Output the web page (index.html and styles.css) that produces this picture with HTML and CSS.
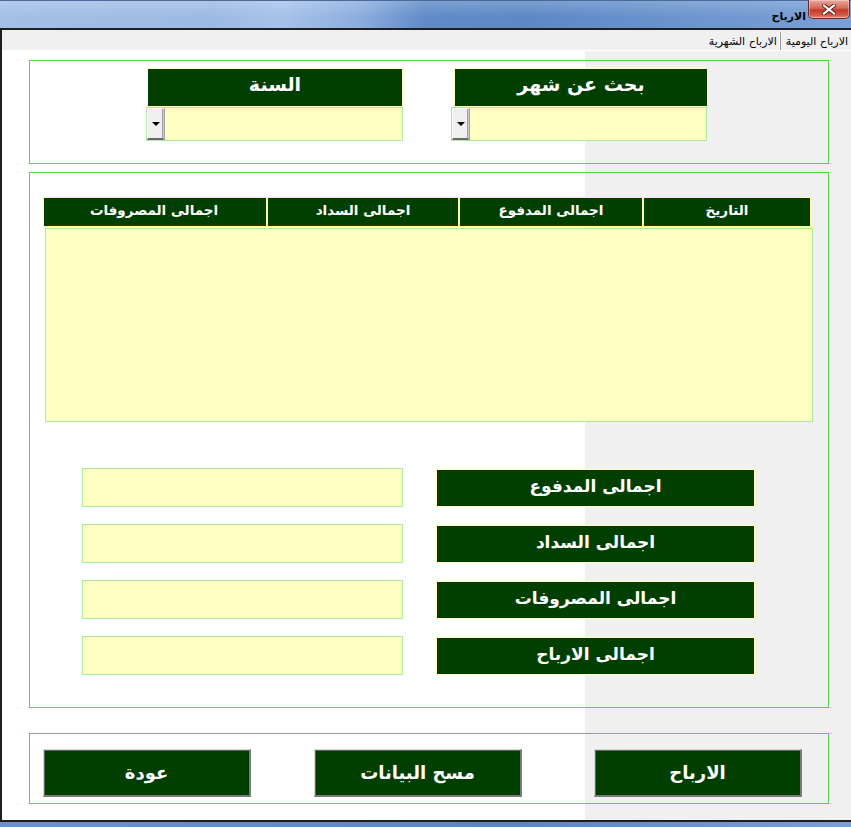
FILE: index.html
```html
<!DOCTYPE html>
<html lang="ar" dir="rtl">
<head>
<meta charset="utf-8">
<title>الارباح</title>
<link rel="stylesheet" href="styles.css">
</head>
<body>
<div class="window">
  <header class="titlebar">
    <button class="close" aria-label="إغلاق">
      <svg width="14" height="11" viewBox="0 0 14 11" aria-hidden="true">
        <path d="M2 1.5 L12 9.5 M12 1.5 L2 9.5" stroke="#5a1a1a" stroke-width="4" stroke-linecap="square"/>
        <path d="M2 1.5 L12 9.5 M12 1.5 L2 9.5" stroke="#ffffff" stroke-width="2.2" stroke-linecap="square"/>
      </svg>
    </button>
    <span class="title">الارباح</span>
  </header>
  <div class="client">
    <nav class="tabs">
      <span class="tab first">الارباح اليومية</span>
      <span class="tab">الارباح الشهرية</span>
    </nav>
    <main class="content">
      <section class="frame filters">
        <div class="group month">
          <div class="label">بحث عن شهر</div>
          <div class="combo"><span class="field"></span><span class="drop"><span class="arrow"></span></span></div>
        </div>
        <div class="group year">
          <div class="label">السنة</div>
          <div class="combo"><span class="field"></span><span class="drop"><span class="arrow"></span></span></div>
        </div>
      </section>

      <section class="frame data">
        <div class="grid-head">
          <div class="col">التاريخ</div>
          <div class="col">اجمالى المدفوع</div>
          <div class="col">اجمالى السداد</div>
          <div class="col last">اجمالى المصروفات</div>
        </div>
        <div class="grid-body"></div>
        <div class="totals">
          <div class="row"><div class="tlabel">اجمالى المدفوع</div><div class="tbox"></div></div>
          <div class="row"><div class="tlabel">اجمالى السداد</div><div class="tbox"></div></div>
          <div class="row"><div class="tlabel">اجمالى المصروفات</div><div class="tbox"></div></div>
          <div class="row"><div class="tlabel">اجمالى الارباح</div><div class="tbox"></div></div>
        </div>
      </section>

      <section class="frame actions">
        <button class="btn b1">الارباح</button>
        <button class="btn b2">مسح البيانات</button>
        <button class="btn b3">عودة</button>
      </section>
    </main>
  </div>
  <div class="bottombar"></div>
</div>
</body>
</html>
```

FILE: styles.css
```css
* { box-sizing: border-box; }
html, body { margin: 0; padding: 0; }
body {
  font-family: "DejaVu Sans", "Liberation Sans", sans-serif;
  background: #ffffff;
}

.window {
  width: 851px;
  height: 827px;
  display: flex;
  flex-direction: column;
  overflow: hidden;
  background: #5a86c3;
}

/* title bar */
.titlebar {
  height: 28px;
  flex: none;
  display: flex;
  align-items: flex-start;
  padding-right: 1px;
  background:
    linear-gradient(to bottom, rgba(255,255,255,0.18), rgba(255,255,255,0) 60%),
    linear-gradient(to right, #a3bfe6 0%, #9dbae4 25%, #a6c2ea 33%, #8eaedf 42%, #5f8bc8 50%, #5c88c6 62%, #6a93cd 78%, #7aa0d5 100%);
  border-top: 1px solid #4a6a9a;
}
.close {
  width: 42px;
  height: 19px;
  margin: -1px 0 0 0;
  padding: 0;
  border: 1px solid #6b2a2a;
  border-top: none;
  border-radius: 0 0 5px 5px;
  background: linear-gradient(to bottom, #e8a89c 0%, #d46a5a 45%, #c23a28 55%, #d45a48 85%, #e89080 100%);
  display: flex;
  align-items: center;
  justify-content: center;
  box-shadow: inset 0 0 0 1px rgba(255,255,255,0.35);
}
.close svg { display: block; }
.title {
  margin-right: 2px;
  margin-top: 9px;
  font-size: 11px;
  font-weight: bold;
  color: #000;
  line-height: 13px;
}

/* client area */
.client {
  height: 794px;
  flex: none;
  display: flex;
  flex-direction: column;
  border-top: 2px solid #1e1e1e;
  border-bottom: 2px solid #1e1e1e;
  border-left: 2px solid #1e1e1e;
}
.tabs {
  height: 21px;
  flex: none;
  display: flex;
  align-items: flex-end;
  background: #f0f0f0;
  border-bottom: 1px solid #ffffff;
}
.tab {
  height: 18px;
  font-size: 11px;
  line-height: 20px;
  padding: 0 3px 0 5px;
  color: #000;
  white-space: nowrap;
}
.tab.first {
  border-left: 1px solid #9a9a9a;
  box-shadow: -1px 0 0 #ffffff;
}

.content {
  flex: 1;
  padding: 9px 22px 0 27px;
  background: linear-gradient(to right, #ffffff 583px, #f0f0f0 583px);
}

.frame {
  width: 800px;
  border: 1px solid #4fd64f;
}

/* filters */
.filters {
  height: 104px;
  display: flex;
  align-items: flex-start;
  padding: 7px 120px 0 0;
  gap: 48px;
}
.group { width: 257px; }
.label {
  height: 39px;
  background: #003f00;
  border: 1px solid #ffffb8;
  color: #ffffff;
  font-weight: bold;
  font-size: 19px;
  line-height: 30px;
  text-align: center;
}
.month .label { margin-left: 3px; }
.year .label { margin-left: 1px; }
.combo {
  height: 34px;
  display: flex;
  background: #ffffc4;
  border: 1px solid #a8eaa0;
}
.month .combo { margin-right: 1px; }
.field { flex: 1; }
.drop {
  width: 17px;
  height: 32px;
  background: #efefef;
  border-top: 1px solid #ffffff;
  border-right: 1px solid #cfcfcf;
  border-left: 1px solid #ffffff;
  border-bottom: 2px solid #6a6a6a;
  box-shadow: 1px 0 0 #a0a0a0, inset -1px 0 0 #a0a0a0;
  display: flex;
  align-items: center;
  justify-content: center;
}
.arrow {
  width: 0;
  height: 0;
  border-left: 4px solid transparent;
  border-right: 4px solid transparent;
  border-top: 4px solid #000;
  margin-top: 1px;
}

/* data */
.data {
  height: 536px;
  margin-top: 8px;
  padding-top: 24px;
}
.grid-head {
  width: 768px;
  height: 30px;
  margin: 0 17px 0 0;
  display: grid;
  grid-template-columns: 168px 184px 192px 224px;
  background: #003f00;
  border: 1px solid #ffff9c;
}
.col {
  color: #ffffff;
  font-weight: bold;
  font-size: 13.5px;
  line-height: 24px;
  text-align: center;
  border-left: 2px solid #ffff9c;
  white-space: nowrap;
}
.col.last { border-left: none; }
.grid-body {
  width: 768px;
  height: 194px;
  margin: 1px 15px 0 0;
  background: #ffffc4;
  border: 1px solid #a8eaa0;
}
.totals {
  margin-top: 46px;
  display: flex;
  flex-direction: column;
  gap: 17px;
}
.row {
  display: flex;
  align-items: flex-start;
  padding-right: 73px;
  gap: 33px;
}
.tlabel {
  width: 319px;
  height: 38px;
  margin-top: 1px;
  background: #003f00;
  border: 1px solid #ffffb8;
  color: #ffffff;
  font-weight: bold;
  font-size: 17px;
  line-height: 32px;
  text-align: center;
  white-space: nowrap;
}
.tbox {
  width: 321px;
  height: 39px;
  background: #ffffc4;
  border: 1px solid #a8eaa0;
}

/* actions */
.actions {
  height: 71px;
  margin-top: 25px;
  display: flex;
  align-items: flex-start;
  padding: 15px 26px 0 0;
}
.btn {
  width: 208px;
  height: 48px;
  margin: 0;
  padding: 0;
  background: #003f00;
  color: #ffffff;
  font-family: "DejaVu Sans", "Liberation Sans", sans-serif;
  font-weight: bold;
  font-size: 18px;
  border-top: 1px solid #d8d8d8;
  border-left: 1px solid #d8d8d8;
  border-right: 2px solid #7a7a7a;
  border-bottom: 2px solid #7a7a7a;
  box-shadow: inset 1px 1px 0 #5a6a5a;
}
.b1 { margin-left: 72px; }
.b2 { margin-left: 63px; }

.bottombar {
  flex: 1;
  background: linear-gradient(to right, #6a93cd, #5a86c3 60%, #7aa0d5);
}
```
